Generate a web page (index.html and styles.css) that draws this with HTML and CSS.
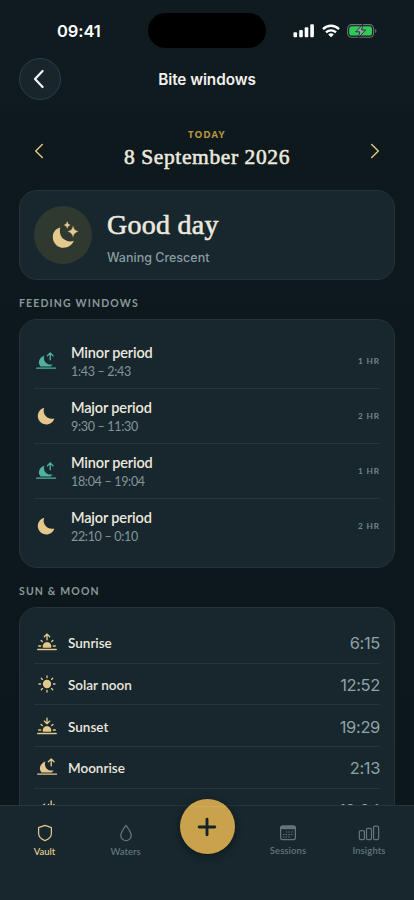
FILE: index.html
```html
<!DOCTYPE html>
<html lang="en">
<head>
<meta charset="utf-8">
<title>Bite windows</title>
<link rel="stylesheet" href="styles.css">
</head>
<body>
<svg width="0" height="0" class="defs">
  <symbol id="moon" viewBox="0 0 24 24">
    <path fill="currentColor" d="M10.300 3.700A8.500 8.500 0 1 0 20.400 14.500C18.400 15.200 15.700 14.900 13.400 13.500C10 11.400 8.800 7.300 10.300 3.700Z"/>
  </symbol>
  <symbol id="moonrise" viewBox="0 0 24 24">
    <path fill="currentColor" d="M10.300 6.500C7 7.800 4.900 10.300 4.900 13.300C4.900 15 5.500 16.400 6.500 17.500H16.700L18.600 15.400C12.500 16.700 8.700 11.700 10.300 6.500Z"/>
    <path class="ln" d="M2.600 19.100H21.600M16.200 10.700V4.200M13.400 6.800L16.200 4L19 6.800"/>
  </symbol>
  <symbol id="moonset" viewBox="0 0 24 24">
    <path fill="currentColor" d="M10.300 6.200C7 7.500 4.900 10.300 4.900 13.300C4.900 15 5.500 16.400 6.500 17.500H16.700L18.600 15.400C12.500 16.700 8.700 11.700 10.300 6.200Z"/>
    <path class="ln" d="M2.600 19.100H21.600M16.200 4V10.200M13.400 7.400L16.200 10.200L19 7.400"/>
  </symbol>
  <symbol id="halfsun" viewBox="0 0 24 24">
    <path fill="currentColor" d="M7.900 17.700A4.300 4.300 0 1 1 16.100 17.700Z"/>
    <path class="ln" d="M2.700 19.500H21.300M3.700 16H5.700M18.300 16H20.300M6.100 10.400L7.300 11.600M17.900 10.400L16.700 11.600"/>
  </symbol>
</svg>

<main class="screen">
  <header class="top">
    <div class="status">
      <span class="clock">09:41</span>
      <span class="island"></span>
      <span class="indicators">
        <svg class="signal" viewBox="0 0 22 14" width="22" height="14"><g fill="#fff"><rect x=".5" y="8.300" width="3.600" height="5" rx="1"/><rect x="6.200" y="6" width="3.600" height="7.300" rx="1"/><rect x="11.700" y="3.300" width="3.600" height="10" rx="1"/><rect x="17.300" y=".3" width="3.600" height="13" rx="1"/></g></svg>
        <svg class="wifi" viewBox="0 0 18 14" width="18" height="14"><g fill="none" stroke="#fff" stroke-width="2.300"><path d="M1 5.100C5.500.6 12.500.6 17 5.100"/><path d="M4 8.400C6.800 5.600 11.200 5.600 14 8.400"/></g><path fill="#fff" d="M9 13.200L6.200 10.400C7.800 9 10.200 9 11.800 10.400Z"/></svg>
        <svg class="battery" viewBox="0 0 30 14" width="30" height="14"><rect x=".6" y=".6" width="26" height="12.600" rx="4" fill="none" stroke="#69767a" stroke-width="1.100"/><path d="M28.200 5V9C29.900 8.300 29.900 5.700 28.200 5Z" fill="#69767a"/><rect x="2.200" y="2.200" width="22.800" height="9.400" rx="2.600" fill="#34c759"/><path d="M15.800 .2L8.800 7.800H12.800L11.600 13.600L18.600 6H14.600Z" fill="#9aa0a6" stroke="#101b1f" stroke-width=".8"/></svg>
      </span>
    </div>
    <div class="nav">
      <button class="back" aria-label="Back"><svg viewBox="0 0 24 24" width="24" height="24"><path d="M14.600 4L7 12L14.600 20" fill="none" stroke="#f4f6f6" stroke-width="2.200" stroke-linecap="round" stroke-linejoin="round"/></svg></button>
      <h1>Bite windows</h1>
    </div>
  </header>

  <section class="day">
    <svg class="chev" viewBox="0 0 10 16" width="10" height="16"><path d="M8.300 1.500L1.700 8L8.300 14.500"/></svg>
    <div class="date"><span class="today">TODAY</span><span class="full">8 September 2026</span></div>
    <svg class="chev" viewBox="0 0 10 16" width="10" height="16"><path d="M1.700 1.500L8.300 8L1.700 14.500"/></svg>
  </section>

  <section class="card hero">
    <span class="orb"><svg viewBox="0 0 30 30" width="30" height="30" fill="#e6c98e"><path d="M11.300 7.500C7.100 8.300 3.800 12.200 3.800 17A10.800 10.800 0 0 0 14.600 27.800C19.600 27.800 23.800 24.300 24.800 20.800C22.400 22 18.400 21.700 15.300 19.600C11.300 16.900 10.100 11.800 11.300 7.500Z"/><path d="M18.200 1.500Q18.600 4.500 21.400 5Q18.600 5.500 18.200 8.500Q17.800 5.500 15 5Q17.800 4.500 18.200 1.500ZM24 5.900Q24.700 10.400 29.200 11.400Q24.700 12.400 24 16.900Q23.300 12.400 18.800 11.400Q23.300 10.400 24 5.900Z" stroke="#e6c98e" stroke-width=".2"/></svg></span>
    <div class="rating"><h2>Good day</h2><p>Waning Crescent</p></div>
  </section>

  <h3>FEEDING WINDOWS</h3>
  <ul class="card windows">
    <li><svg class="icon teal"><use href="#moonrise"/></svg><div><b>Minor period</b><span>1:43 – 2:43</span></div><em>1 HR</em></li>
    <li><svg class="icon"><use href="#moon"/></svg><div><b>Major period</b><span>9:30 – 11:30</span></div><em>2 HR</em></li>
    <li><svg class="icon teal"><use href="#moonrise"/></svg><div><b>Minor period</b><span>18:04 – 19:04</span></div><em>1 HR</em></li>
    <li><svg class="icon"><use href="#moon"/></svg><div><b>Major period</b><span>22:10 – 0:10</span></div><em>2 HR</em></li>
  </ul>

  <h3 class="second">SUN &amp; MOON</h3>
  <ul class="card sky">
    <li><svg class="icon" viewBox="0 0 24 24"><use href="#halfsun"/><path class="ln" d="M12 9.800V4.200M9.300 6.800L12 4.100L14.700 6.800"/></svg><b>Sunrise</b><time>6:15</time></li>
    <li><svg class="icon" viewBox="0 0 24 24"><circle cx="12" cy="12" r="4.200" fill="currentColor"/><path class="ln" d="M12 4V5.500M12 18.500V20M4 12H5.500M18.500 12H20M6.300 6.300L7.400 7.400M16.600 16.600L17.700 17.700M17.700 6.300L16.600 7.400M7.400 16.600L6.300 17.700"/></svg><b>Solar noon</b><time>12:52</time></li>
    <li><svg class="icon" viewBox="0 0 24 24"><use href="#halfsun"/><path class="ln" d="M12 4.200V9.700M9.300 7.100L12 9.800L14.700 7.100"/></svg><b>Sunset</b><time>19:29</time></li>
    <li><svg class="icon"><use href="#moonrise"/></svg><b>Moonrise</b><time>2:13</time></li>
    <li class="last"><svg class="icon"><use href="#moonset"/></svg><b>Moonset</b><time>18:04</time></li>
  </ul>

  <nav class="tabs">
    <a class="tab active"><svg viewBox="0 0 20 20" width="20" height="20"><path d="M10 2.400L16.400 4.700V10.500C16.400 14 13.500 16.200 10 17.600C6.500 16.200 3.600 14 3.600 10.500V4.700Z"/></svg><span>Vault</span></a>
    <a class="tab"><svg viewBox="0 0 20 20" width="20" height="20"><path d="M10 2.300C12 5.300 15.200 9.200 15.200 12.500A5.200 5.200 0 0 1 4.800 12.500C4.800 9.200 8 5.300 10 2.300Z"/></svg><span>Waters</span></a>
    <button class="add" aria-label="Add"><svg viewBox="0 0 20 20" width="20" height="20"><path d="M10 2.200V17.800M2.200 10H17.800" stroke="#172329" stroke-width="2.900" stroke-linecap="round"/></svg></button>
    <a class="tab sf"><svg viewBox="0 0 20 20" width="20" height="20"><rect x="2.600" y="3" width="14.800" height="13.600" rx="2.200"/><path d="M2.600 5.700V5A2 2 0 0 1 4.600 3H15.400A2 2 0 0 1 17.400 5V5.700Z" fill="currentColor"/><path d="M7.800 9H15.500M5 11.500H15.500M5 14H13" stroke-dasharray="1.500 1.100" stroke-width="1.200"/></svg><span>Sessions</span></a>
    <a class="tab sf"><svg viewBox="0 0 22 20" width="22" height="20"><rect x="1.400" y="7.500" width="5" height="9" rx="1.300"/><rect x="8.500" y="5.400" width="5" height="11.100" rx="1.300"/><rect x="15.600" y="3" width="5" height="13.500" rx="1.300"/></svg><span>Insights</span></a>
  </nav>
</main>
</body>
</html>
```
FILE: styles.css
```css
* { box-sizing: border-box; margin: 0; padding: 0; }
html, body { height: 100%; }
body { background: #0e191d; overflow: hidden; font-family: Lato, "Liberation Sans", sans-serif; color: #ece8df; }
button { border: 0; font: inherit; }
ul { list-style: none; }
.defs { position: absolute; }
.screen { height: 900px; width: 414px; overflow: hidden; position: relative; padding: 0 19px; background: linear-gradient(#101b1f 0, #101b1f 104px, #0e191d 116px, #0d171b); }
.ln { fill: none; stroke: currentColor; stroke-width: 1.35; stroke-linecap: round; stroke-linejoin: round; }

.status { height: 58px; display: grid; grid-template-columns: 129px 118px 129px; align-items: center; padding-top: 3px; }
.clock { font: 600 16.5px/20px Inter, sans-serif; color: #fff; padding-left: 38px; letter-spacing: -.1px; }
.island { height: 35px; border-radius: 18px; background: #000; }
.indicators { display: flex; align-items: center; padding-left: 27px; }
.wifi { margin-left: 7px; }
.battery { margin-left: 7px; }

.nav { height: 42px; display: grid; grid-template-columns: 42px 1fr 42px; align-items: center; }
.back { width: 42px; height: 42px; border-radius: 50%; border: 1px solid #254049; background: #18262c; display: flex; align-items: center; justify-content: center; }
.nav h1 { font: 600 15.3px/20px Inter, sans-serif; text-align: center; color: #f2f1ee; letter-spacing: -.06px; padding-top: 2px; }

.day { display: flex; justify-content: space-between; align-items: center; padding: 0 15px 2px; height: 76px; margin-top: 14px; }
.chev { fill: none; stroke: #e2c281; stroke-width: 1.500; stroke-linecap: round; stroke-linejoin: round; }
.date { display: flex; flex-direction: column; align-items: center; padding-bottom: 4px; }
.today { font-size: 9px; line-height: 12px; font-weight: 800; letter-spacing: 1.35px; color: #b8963f; }
.full { font: 21.500px/26px "Liberation Serif", serif; margin-top: 3px; -webkit-text-stroke: .55px currentColor; letter-spacing: .6px; white-space: nowrap; }

.card { background: #17272d; border: 1px solid #243439; border-radius: 18px; }
.hero { height: 90px; display: flex; align-items: center; padding: 0 14px; gap: 15px; }
.orb { width: 58px; height: 58px; border-radius: 50%; background: #303930; display: flex; align-items: center; justify-content: center; }
.orb svg { margin-left: 2px; }
.rating { padding-top: 3px; }
.rating h2 { font: 28px/36px "Liberation Serif", serif; -webkit-text-stroke: .6px currentColor; letter-spacing: .25px; }
.rating p { font: 500 12.500px/18px Inter, sans-serif; color: #899ca2; margin-top: 6px; }

h3 { font-size: 10.500px; line-height: 14px; font-weight: 700; letter-spacing: 1.150px; color: #87989d; margin: 16px 0 9px; }
.card li { display: flex; align-items: center; border-bottom: 1px solid #25353a; }
.card li:last-child { border-bottom: 0; }
.icon { width: 24px; height: 24px; color: #e3c78c; flex: none; }
.teal { color: #50b1a1; }

.windows { height: 249px; padding: 14px 14px 0; }
.windows li { height: 54.900px; }
.windows div { display: flex; flex-direction: column; margin-left: 13px; flex: 1; padding-top: 2px; }
.windows b { font-size: 14.500px; line-height: 18px; font-weight: 600; letter-spacing: -.15px; }
.windows span { font-size: 12.500px; line-height: 16px; color: #83959a; margin-top: 2px; letter-spacing: -.32px; }
.windows em { font: 700 8.200px/12px Lato, sans-serif; letter-spacing: .9px; color: #74868b; }

.sky { padding: 14px 14px 0; height: 260px; }
.sky li { height: 41.700px; }
.sky .icon { margin-left: 1px; }
.sky b { font-size: 13.500px; line-height: 18px; font-weight: 600; margin-left: 9px; flex: 1; padding-top: 2px; }
.sky time { font: 400 16.500px/20px Inter, sans-serif; letter-spacing: -.35px; padding-top: 2px; color: #8fa1a6; }
.sky .last { padding-bottom: 1px; }

.tabs { position: absolute; left: 0; right: 0; bottom: 0; height: 95px; background: #17272d; border-top: 1px solid #263539; display: grid; grid-template-columns: 81px 81px 82px 80px 82px; justify-content: center; }
.tab { display: flex; flex-direction: column; align-items: center; color: #62757a; padding-top: 17px; font-size: 9.500px; line-height: 12px; font-weight: 600; gap: 3px; }
.tab svg { fill: none; stroke: currentColor; stroke-width: 1.250; stroke-linejoin: round; }
.tab.active { color: #dfc58b; }
.tab.sf { gap: 2px; letter-spacing: .1px; }
.add { width: 55px; height: 55px; border-radius: 50%; background: linear-gradient(#c9a24b 7px, #cdab5c 7px, #cdab5c 8px, #c9a24b 8px); box-shadow: 0 2px 8px #0006; display: flex; align-items: center; justify-content: center; margin-top: -7px; justify-self: center; }
```
